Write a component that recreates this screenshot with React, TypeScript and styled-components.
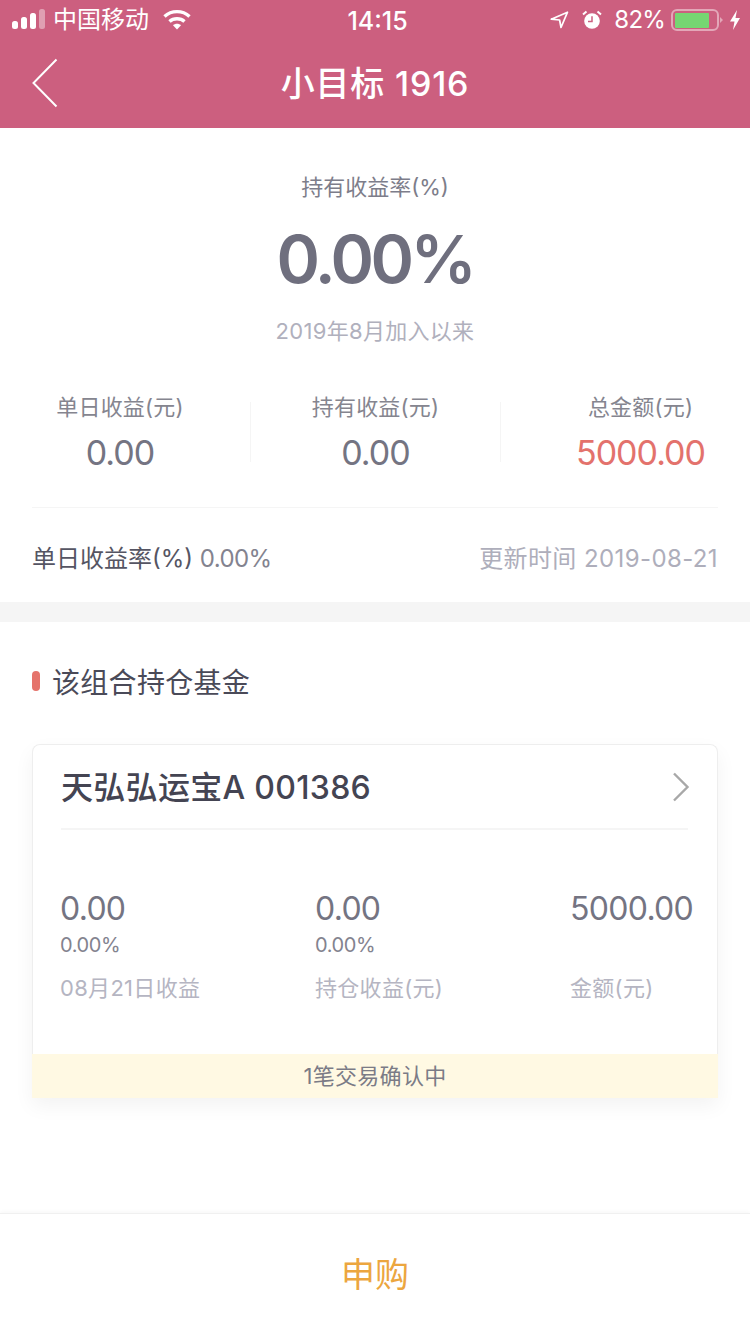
import React from "react";
import styled, { createGlobalStyle } from "styled-components";

const GlobalStyle = createGlobalStyle`
  html, body {
    margin: 0;
    padding: 0;
    background: #fff;
  }
  * {
    box-sizing: border-box;
  }
`;

const FONT = `Inter, "Noto Sans CJK SC", sans-serif`;

const Page = styled.div`
  width: 750px;
  height: 1334px;
  display: flex;
  flex-direction: column;
  overflow: hidden;
  font-family: ${FONT};
  background: #fff;
`;

const Header = styled.header`
  height: 128px;
  background: #cc5f7f;
  color: #fff;
  flex: none;
`;

const StatusBar = styled.div`
  height: 40px;
  padding: 0 9px 0 12px;
  display: flex;
  align-items: center;
  justify-content: space-between;
  position: relative;
`;

const StatusSide = styled.div`
  display: flex;
  align-items: center;
`;

const Carrier = styled.span`
  margin: 0 14px 0 7px;
  font-size: 24px;
  line-height: 40px;
`;

const Clock = styled.span`
  position: absolute;
  left: 5px;
  right: 0;
  top: 0;
  line-height: 42px;
  text-align: center;
  font-size: 25px;
  font-weight: 500;
`;

const BatteryText = styled.span`
  margin: 0 6px 0 12px;
  font-size: 24px;
  line-height: 40px;
  letter-spacing: -0.8px;
`;

const AlarmIcon = styled.svg`
  margin-left: 13px;
`;

const BoltIcon = styled.svg`
  margin-left: 6px;
`;

const NavBar = styled.div`
  height: 88px;
  padding: 0 32px;
  display: flex;
  align-items: center;
  position: relative;
`;

const NavTitle = styled.h1`
  flex: 1;
  margin: 0;
  text-align: center;
  font-size: 34px;
  font-weight: 500;
  line-height: 88px;
  letter-spacing: 0.8px;
`;

const BackIcon = styled.svg`
  position: absolute;
  left: 32px;
  top: 18px;
`;

const Hero = styled.div`
  display: flex;
  flex-direction: column;
  align-items: center;
  padding-top: 44px;
`;

const HeroLabel = styled.div`
  font-size: 22px;
  line-height: 30px;
  color: #7d7d8a;
`;

const HeroValue = styled.div`
  margin-top: 17px;
  font-size: 66px;
  line-height: 80px;
  font-weight: 600;
  letter-spacing: -3.5px;
  color: #6f6f7e;
`;

const HeroHint = styled.div`
  margin-top: 17px;
  font-size: 22px;
  line-height: 30px;
  letter-spacing: 0.3px;
  color: #b0b0bd;
`;

const Stats = styled.div`
  margin-top: 56px;
  display: grid;
  grid-template-columns: 251px 250px 249px;
`;

const Stat = styled.div<{ $left?: number; $right?: number; $divided?: boolean }>`
  height: 60px;
  padding-left: ${(p) => p.$left || 0}px;
  padding-right: ${(p) => p.$right || 0}px;
  border-right: ${(p) => (p.$divided ? "1px solid #f5f5f5" : "none")};
  display: flex;
  flex-direction: column;
  align-items: center;
`;

const StatLabel = styled.div`
  margin-top: -10px;
  font-size: 22px;
  line-height: 30px;
  letter-spacing: 0.2px;
  color: #85858f;
  white-space: nowrap;
`;

const StatValue = styled.div<{ $accent?: boolean }>`
  margin-top: 9px;
  font-size: 34px;
  line-height: 44px;
  letter-spacing: -1px;
  color: ${(p) => (p.$accent ? "#e3726c" : "#747482")};
  white-space: nowrap;
`;

const RateRow = styled.div`
  margin: 45px 32px 0;
  height: 95px;
  padding-top: 2px;
  border-top: 1px solid #f5f5f5;
  display: flex;
  align-items: center;
  justify-content: space-between;
  font-size: 24px;
`;

const RateLabel = styled.span`
  color: #555563;
`;

const RateValue = styled.span`
  letter-spacing: -0.6px;
  color: #83838f;
`;

const UpdatedAt = styled.span`
  letter-spacing: 0.4px;
  color: #aeaebb;
`;

const Band = styled.div`
  height: 20px;
  background: #f5f5f5;
  flex: none;
`;

const Holdings = styled.section`
  padding: 0 32px;
`;

const SectionTitle = styled.h2`
  margin: 0;
  height: 122px;
  padding-bottom: 4px;
  display: flex;
  align-items: center;
  gap: 12px;
  font-size: 28px;
  font-weight: 400;
  letter-spacing: 0.3px;
  color: #4a4a58;
`;

const Marker = styled.i`
  width: 8px;
  height: 20px;
  border-radius: 4px;
  background: #e5736b;
`;

const FundCard = styled.div`
  height: 354px;
  border: 1px solid #eeeeee;
  border-bottom: none;
  border-radius: 8px 8px 0 0;
  background: #fff;
  box-shadow: 0 8px 20px rgba(0, 0, 0, 0.05);
  display: flex;
  flex-direction: column;
`;

const FundHead = styled.div`
  margin: 0 29px 0 28px;
  height: 85px;
  padding-bottom: 4px;
  border-bottom: 2px solid #f5f5f5;
  display: flex;
  align-items: center;
  justify-content: space-between;
`;

const FundName = styled.div`
  font-size: 32px;
  font-weight: 500;
  letter-spacing: 0.3px;
  color: #444452;
`;

const ChevronIcon = styled.svg`
  margin-right: -2px;
  margin-top: 5px;
`;

const FundStats = styled.div`
  flex: 1;
  padding: 59px 0 0 27px;
  display: grid;
  grid-template-columns: repeat(3, 255px);
`;

const FundStat = styled.div`
  display: flex;
  flex-direction: column;
  white-space: nowrap;
`;

const FundValue = styled.div`
  font-size: 32px;
  line-height: 40px;
  letter-spacing: -0.7px;
  color: #747482;
`;

const FundRate = styled.div`
  height: 26px;
  margin-top: 3px;
  font-size: 20px;
  line-height: 26px;
  letter-spacing: -0.4px;
  color: #83838f;
`;

const FundLabel = styled.div`
  margin-top: 15px;
  font-size: 22px;
  line-height: 30px;
  letter-spacing: 0.3px;
  color: #b5b5c2;
`;

const Notice = styled.div`
  height: 44px;
  margin: 0 -1px;
  background: #fff9e3;
  text-align: center;
  font-size: 22px;
  line-height: 44px;
  letter-spacing: 0.3px;
  color: #7b7b86;
`;

const BottomBar = styled.footer`
  margin-top: auto;
  height: 121px;
  flex: none;
  padding-bottom: 4px;
  background: #fff;
  border-top: 1px solid #f0f0f0;
  box-shadow: 0 -1px 4px rgba(0, 0, 0, 0.04);
  display: flex;
  align-items: center;
  justify-content: center;
  font-size: 34px;
  color: #eca63f;
`;

const fundStats = [
  { value: "0.00", rate: "0.00%", label: "08月21日收益" },
  { value: "0.00", rate: "0.00%", label: "持仓收益(元)" },
  { value: "5000.00", rate: "", label: "金额(元)" },
];

export default function App() {
  return (
    <Page>
      <GlobalStyle />
      <Header>
        <StatusBar>
          <StatusSide>
            <svg width="34" height="22" viewBox="0 0 34 22">
              <rect x="0" y="12" width="6" height="8" rx="2.5" fill="#fff" />
              <rect x="9" y="8" width="6" height="12" rx="2.5" fill="#fff" />
              <rect x="18" y="4" width="6" height="16" rx="2.5" fill="#fff" />
              <rect x="27" y="0" width="6" height="20" rx="2.5" fill="#fff" opacity="0.4" />
            </svg>
            <Carrier>中国移动</Carrier>
            <svg width="28" height="22" viewBox="0 0 28 22">
              <path d="M1.5 7.5C8.5 1 19.5 1 26.5 7.5" fill="none" stroke="#fff" strokeWidth="3.4" />
              <path d="M6.5 12.5C10.5 8.8 17.5 8.8 21.5 12.5" fill="none" stroke="#fff" strokeWidth="3.4" />
              <path d="M10 16.2C12.2 14.2 15.8 14.2 18 16.2L14 20.5Z" fill="#fff" />
            </svg>
          </StatusSide>
          <Clock>14:15</Clock>
          <StatusSide>
            <svg width="19" height="18" viewBox="0 0 19 18">
              <path d="M17.5 1.2L1.2 8.2L9.6 9L11 16.5Z" fill="none" stroke="#fff" strokeWidth="1.7" strokeLinejoin="round" />
            </svg>
            <AlarmIcon width="20" height="20" viewBox="0 0 20 20">
              <circle cx="10" cy="11" r="7.8" fill="#fff" />
              <path d="M10 6.2V11.4H6" fill="none" stroke="#cc5f7f" strokeWidth="1.5" />
              <path d="M1 4.5L4.5 1.5M19 4.5L15.5 1.5" stroke="#fff" strokeWidth="2" />
            </AlarmIcon>
            <BatteryText>82%</BatteryText>
            <svg width="52" height="24" viewBox="0 0 52 24">
              <rect x="1" y="2" width="46" height="20" rx="5" fill="none" stroke="#fff" strokeOpacity="0.45" strokeWidth="2" />
              <rect x="4" y="5" width="34" height="15" rx="1" fill="#76d672" />
              <path d="M49 9L52 12L49 15Z" fill="#fff" fillOpacity="0.45" />
            </svg>
            <BoltIcon width="12" height="22" viewBox="0 0 12 22">
              <path d="M8 1L1 12.5H5.5L4 21L11 9H6.5Z" fill="#fff" />
            </BoltIcon>
          </StatusSide>
        </StatusBar>
        <NavBar>
          <BackIcon width="26" height="50" viewBox="0 0 26 50">
            <path d="M24.5 1.5L1.5 25L24.5 48.5" fill="none" stroke="#fff" strokeWidth="2" />
          </BackIcon>
          <NavTitle>小目标 1916</NavTitle>
        </NavBar>
      </Header>

      <section>
        <Hero>
          <HeroLabel>持有收益率(%)</HeroLabel>
          <HeroValue>0.00%</HeroValue>
          <HeroHint>2019年8月加入以来</HeroHint>
        </Hero>
        <Stats>
          <Stat $right={10} $divided>
            <StatLabel>单日收益(元)</StatLabel>
            <StatValue>0.00</StatValue>
          </Stat>
          <Stat $divided>
            <StatLabel>持有收益(元)</StatLabel>
            <StatValue>0.00</StatValue>
          </Stat>
          <Stat $left={30}>
            <StatLabel>总金额(元)</StatLabel>
            <StatValue $accent>5000.00</StatValue>
          </Stat>
        </Stats>
        <RateRow>
          <span>
            <RateLabel>单日收益率(%)</RateLabel> <RateValue>0.00%</RateValue>
          </span>
          <UpdatedAt>更新时间 2019-08-21</UpdatedAt>
        </RateRow>
      </section>

      <Band />

      <Holdings>
        <SectionTitle>
          <Marker />
          该组合持仓基金
        </SectionTitle>
        <FundCard>
          <FundHead>
            <FundName>天弘弘运宝A 001386</FundName>
            <ChevronIcon width="18" height="30" viewBox="0 0 18 30">
              <path d="M2 1.5L15.5 15L2 28.5" fill="none" stroke="#a8a8a8" strokeWidth="2.4" />
            </ChevronIcon>
          </FundHead>
          <FundStats>
            {fundStats.map((item) => (
              <FundStat key={item.label}>
                <FundValue>{item.value}</FundValue>
                <FundRate>{item.rate}</FundRate>
                <FundLabel>{item.label}</FundLabel>
              </FundStat>
            ))}
          </FundStats>
          <Notice>1笔交易确认中</Notice>
        </FundCard>
      </Holdings>

      <BottomBar>申购</BottomBar>
    </Page>
  );
}
